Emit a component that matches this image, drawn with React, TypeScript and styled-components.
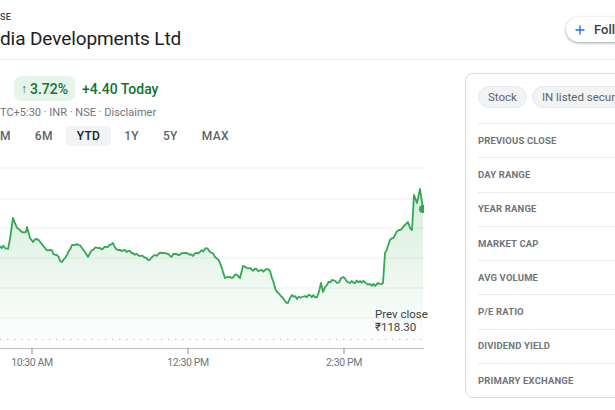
import styled, { createGlobalStyle } from 'styled-components';

const GlobalStyle = createGlobalStyle`
  html, body {
    margin: 0;
    padding: 0;
    background: #ffffff;
    overflow: hidden;
  }
  body {
    font-family: Roboto, 'Liberation Sans', sans-serif;
    color: #202124;
  }
`;

// rough intraday shape, page x / page y (chart svg starts at y=150)
const anchors: [number, number][] = [
  [0, 246], [5, 248], [8, 249], [10, 239], [13, 218], [17, 228], [22, 232], [26, 232],
  [27, 227], [30, 238], [33, 242], [37, 239], [41, 243], [45, 248], [50, 250], [57, 255],
  [62, 262], [67, 255], [72, 245], [77, 244], [82, 248], [85, 252], [88, 257], [92, 250],
  [100, 248], [108, 247], [113, 243], [118, 250], [125, 250], [133, 253], [140, 256],
  [148, 260], [155, 255], [162, 253], [170, 256], [178, 255], [185, 253], [193, 256],
  [200, 252], [208, 249], [215, 257], [220, 263], [225, 278], [230, 277], [237, 275],
  [240, 278], [243, 266], [250, 268], [258, 271], [265, 270], [270, 271], [272, 278],
  [277, 292], [283, 298], [288, 303], [292, 295], [297, 299], [302, 297], [310, 295],
  [317, 297], [321, 283], [323, 292], [327, 285], [332, 280], [337, 283], [343, 277],
  [350, 283], [360, 281], [370, 284], [375, 286], [378, 283], [383, 283], [385, 253],
  [390, 240], [395, 235], [400, 230], [405, 225], [408, 222], [410, 228], [412, 230],
  [414, 195], [417, 203], [420, 189], [423, 209],
];

const noise = (i: number) => {
  const v = Math.sin(i * 12.9898) * 43758.5453;
  return (v - Math.floor(v)) * 2 - 1;
};

const buildPoints = () => {
  const pts: [number, number][] = [];
  let n = 0;
  for (let a = 0; a < anchors.length - 1; a++) {
    const [x0, y0] = anchors[a];
    const [x1, y1] = anchors[a + 1];
    pts.push([x0, y0]);
    const steps = Math.floor((x1 - x0) / 1.6);
    for (let s = 1; s < steps; s++) {
      const t = s / steps;
      n++;
      pts.push([x0 + (x1 - x0) * t, y0 + (y1 - y0) * t + noise(n) * 1.7]);
    }
  }
  pts.push(anchors[anchors.length - 1]);
  return pts.map(([x, y]) => [x, y - 150] as [number, number]);
};

const points = buildPoints();
const linePath = points.map(([x, y], i) => `${i ? 'L' : 'M'}${x.toFixed(1)} ${y.toFixed(1)}`).join(' ');
const areaPath = `${linePath} L423 198 L0 198 Z`;

const gridLines = [18, 49, 78, 108, 138, 168];
const ticks = [
  { x: 32, label: '10:30 AM' },
  { x: 188, label: '12:30 PM' },
  { x: 344, label: '2:30 PM' },
];

const ranges = ['M', '6M', 'YTD', '1Y', '5Y', 'MAX'];
const stats = [
  'Previous close',
  'Day range',
  'Year range',
  'Market cap',
  'Avg Volume',
  'P/E ratio',
  'Dividend yield',
  'Primary exchange',
];

const App = () => {
  return (
    <>
      <GlobalStyle />
      <Page>
        <Header>
          <TitleBlock>
            <Exchange>SE</Exchange>
            <Title>dia Developments Ltd</Title>
          </TitleBlock>
          <FollowButton>
            <svg width="12" height="12" viewBox="0 0 12 12">
              <path d="M6 1.5v9M1.5 6h9" stroke="#1a73e8" strokeWidth="1.4" />
            </svg>
            Follow
          </FollowButton>
        </Header>
        <Body>
          <MainColumn>
            <PriceRow>
              <ChangeBadge>
                <span>↑</span>3.72%
              </ChangeBadge>
              <TodayChange>+4.40 Today</TodayChange>
            </PriceRow>
            <Meta>TC+5:30 · INR · NSE · Disclaimer</Meta>
            <RangeTabs>
              {ranges.map((r) => (
                <RangeTab key={r} $active={r === 'YTD'}>
                  {r}
                </RangeTab>
              ))}
            </RangeTabs>
            <ChartWrap>
              <svg width="424" height="220" viewBox="0 0 424 220">
                <defs>
                  <linearGradient id="fill" x1="0" y1="0" x2="0" y2="1">
                    <stop offset="0%" stopColor="#34a853" stopOpacity="0.2" />
                    <stop offset="100%" stopColor="#34a853" stopOpacity="0" />
                  </linearGradient>
                </defs>
                {gridLines.map((y) => (
                  <line key={y} x1="0" x2="424" y1={y} y2={y} stroke="#eeeff1" strokeWidth="1" />
                ))}
                <path d={areaPath} fill="url(#fill)" />
                <line x1="0" x2="424" y1="189.5" y2="189.5" stroke="#bdc1c6" strokeWidth="1" strokeDasharray="1.5 5.5" />
                <path d={linePath} fill="none" stroke="#34a853" strokeWidth="1.8" strokeLinejoin="round" />
                <circle cx="423" cy="59" r="4" fill="#34a853" />
                <line x1="0" x2="424" y1="198.5" y2="198.5" stroke="#bdc1c6" strokeWidth="1" />
                {ticks.map((t) => (
                  <g key={t.x}>
                    <line x1={t.x} x2={t.x} y1="198" y2="204" stroke="#9aa0a6" strokeWidth="1.2" />
                    <AxisLabel x={t.x} y="216" textAnchor="middle">
                      {t.label}
                    </AxisLabel>
                  </g>
                ))}
              </svg>
              <PrevClose>
                <div>Prev close</div>
                <div>₹118.30</div>
              </PrevClose>
            </ChartWrap>
          </MainColumn>
          <StatsCard>
            <Chips>
              <Chip>Stock</Chip>
              <Chip>IN listed security</Chip>
            </Chips>
            {stats.map((s) => (
              <StatRow key={s}>{s}</StatRow>
            ))}
          </StatsCard>
        </Body>
      </Page>
    </>
  );
};

const Page = styled.div`
  width: 700px;
  display: flex;
  flex-direction: column;
`;

const Header = styled.div`
  display: flex;
  justify-content: space-between;
  align-items: flex-start;
  padding: 12px 20px 5px 0;
  border-bottom: 1px solid #e8eaed;
`;

const TitleBlock = styled.div`
  display: flex;
  flex-direction: column;
`;

const Exchange = styled.div`
  font-size: 9px;
  font-weight: 500;
  line-height: 11px;
  letter-spacing: 0.4px;
  color: #3c4043;
`;

const Title = styled.h1`
  margin: 1px 0 0;
  font-family: Roboto, sans-serif;
  font-size: 19px;
  font-weight: 400;
  line-height: 30px;
  letter-spacing: -0.1px;
  color: #202124;
`;

const FollowButton = styled.button`
  margin-top: 5px;
  height: 25px;
  width: 114px;
  display: flex;
  align-items: center;
  gap: 8px;
  padding: 0 8px;
  border: none;
  border-radius: 13px;
  background: #fff;
  box-shadow: 0 1px 2px rgba(60, 64, 67, 0.3), 0 1px 3px 1px rgba(60, 64, 67, 0.15);
  font-family: Roboto, sans-serif;
  font-size: 13px;
  font-weight: 500;
  color: #3c4043;
`;

const Body = styled.div`
  display: flex;
  align-items: flex-start;
`;

const MainColumn = styled.div`
  flex: 0 0 465px;
  display: flex;
  flex-direction: column;
  padding-top: 16px;
`;

const PriceRow = styled.div`
  display: flex;
  align-items: center;
  gap: 7px;
  padding-left: 14px;
`;

const ChangeBadge = styled.div`
  height: 25px;
  display: flex;
  align-items: center;
  padding: 0 7px;
  border-radius: 7px;
  background: #e6f4ea;
  color: #137333;
  font-size: 14px;
  font-weight: 500;

  span {
    font-size: 12px;
    margin-right: 3px;
  }
`;

const TodayChange = styled.div`
  font-size: 14px;
  font-weight: 500;
  color: #137333;
`;

const Meta = styled.div`
  margin-top: 5px;
  font-size: 11px;
  line-height: 14px;
  color: #70757a;
`;

const RangeTabs = styled.div`
  display: flex;
  gap: 2px;
  margin-top: 6px;
`;

const RangeTab = styled.div<{ $active?: boolean }>`
  height: 20px;
  display: flex;
  align-items: center;
  padding: 0 11px;
  border-radius: 3px;
  background: ${(p) => (p.$active ? '#f1f3f4' : 'transparent')};
  color: ${(p) => (p.$active ? '#202124' : '#5f6368')};
  font-size: 12px;
  font-weight: 500;
  letter-spacing: 0.3px;

  &:first-child {
    padding-left: 0;
  }
`;

const ChartWrap = styled.div`
  position: relative;
  margin-top: 4px;
  height: 220px;

  svg {
    display: block;
  }
`;

const AxisLabel = styled.text`
  font-family: Roboto, sans-serif;
  font-size: 10.5px;
  letter-spacing: -0.4px;
  fill: #70757a;
`;

const PrevClose = styled.div`
  position: absolute;
  left: 375px;
  top: 158px;
  display: flex;
  flex-direction: column;
  font-size: 11.5px;
  line-height: 13px;
  color: #3c4043;
`;

const StatsCard = styled.div`
  margin-top: 13px;
  width: 260px;
  border: 1px solid #dadce0;
  border-radius: 8px;
  padding: 12px 0 0 12px;
  display: flex;
  flex-direction: column;
`;

const Chips = styled.div`
  display: flex;
  gap: 5px;
  padding-bottom: 15px;
`;

const Chip = styled.div`
  height: 20px;
  display: flex;
  align-items: center;
  padding: 0 9px;
  border: 1px solid #e8eaed;
  border-radius: 11px;
  background: #f1f3f4;
  font-size: 11.5px;
  color: #5f6368;
  white-space: nowrap;
`;

const StatRow = styled.div`
  height: 34.3px;
  display: flex;
  align-items: center;
  border-top: 1px solid #e8eaed;
  box-sizing: border-box;
  padding-bottom: 1px;
  font-size: 9.5px;
  font-weight: 700;
  letter-spacing: 0.15px;
  text-transform: uppercase;
  color: #70757a;
`;

export default App;
